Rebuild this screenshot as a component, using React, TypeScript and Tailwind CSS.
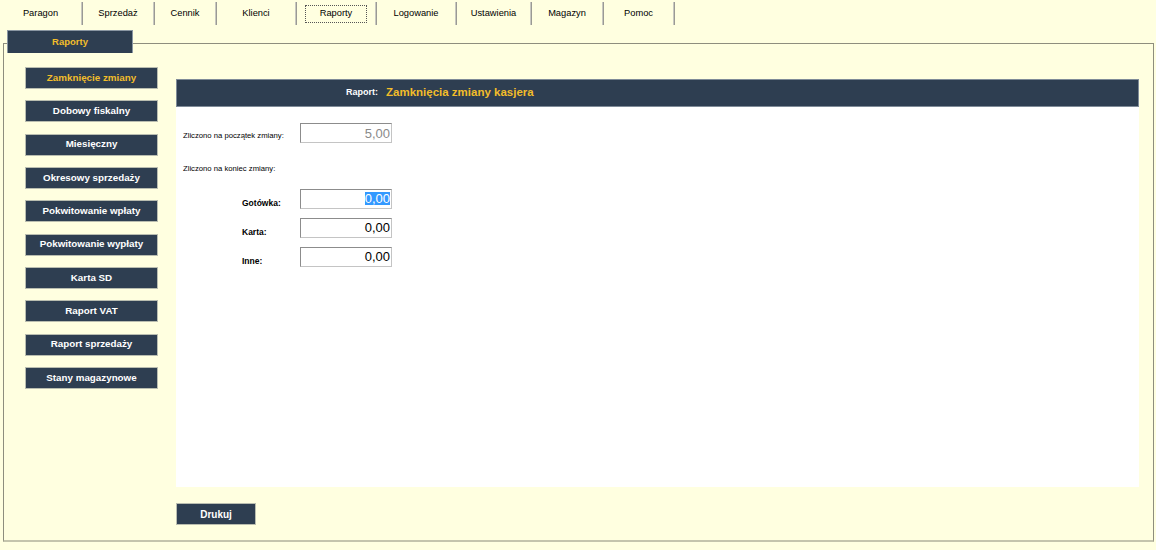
import React from "react";

const navItems: { label: string; w: string; active?: boolean }[] = [
  { label: "Paragon", w: "w-[81px]" },
  { label: "Sprzedaż", w: "w-[70px]" },
  { label: "Cennik", w: "w-[60px]" },
  { label: "Klienci", w: "w-[78px]" },
  { label: "Raporty", w: "w-[78px]", active: true },
  { label: "Logowanie", w: "w-[78px]" },
  { label: "Ustawienia", w: "w-[73px]" },
  { label: "Magazyn", w: "w-[70px]" },
  { label: "Pomoc", w: "w-[69px]" },
];

const sideButtons = [
  "Zamknięcie zmiany",
  "Dobowy fiskalny",
  "Miesięczny",
  "Okresowy sprzedaży",
  "Pokwitowanie wpłaty",
  "Pokwitowanie wypłaty",
  "Karta SD",
  "Raport VAT",
  "Raport sprzedaży",
  "Stany magazynowe",
];

function Field({ children, gray }: { children: React.ReactNode; gray?: boolean }) {
  return (
    <div
      className={
        "w-[92px] h-[20px] border border-[#c4c4c4] border-t-[#8c8c8c] border-l-[#8c8c8c] bg-white flex items-center justify-end pr-[1px] text-[13px] leading-none " +
        (gray ? "text-[#8a8a8a]" : "text-black")
      }
    >
      {children}
    </div>
  );
}

export default function App() {
  return (
    <div className="w-[1156px] h-[550px] bg-[#ffffe0] text-black font-['Liberation_Sans',Arial,sans-serif] overflow-hidden">
      {/* top navigation */}
      <nav className="flex h-[26px] pt-[2px]">
        {navItems.map((it) => (
          <React.Fragment key={it.label}>
            <div className={it.w + " h-[23px] flex items-center justify-center text-[9.3px]"}>
              {it.active ? (
                <span className="w-[62px] h-[18px] border border-dotted border-[#555] flex items-center justify-center">
                  {it.label}
                </span>
              ) : (
                <span>{it.label}</span>
              )}
            </div>
            <div className="w-[2px] h-[23px] bg-[#9a9a94] border-l border-[#c8c8c0]" />
          </React.Fragment>
        ))}
      </nav>

      {/* panel */}
      <div className="relative ml-[3px] mt-[17px] w-[1151px] h-[499px] border border-[#8e8e7e] border-b-2 border-b-[#c4c4ac]">
        <div className="absolute -top-[14px] left-[3px] w-[126px] h-[23px] bg-[#2e3e51] border border-[#8a96a2] border-b-0 flex items-center justify-center text-[9.5px] font-bold text-[#f2bd2a]">
          Raporty
        </div>

        <div className="flex pl-[21px] pt-[23px]">
          {/* side buttons */}
          <div className="flex flex-col gap-[11.33px] w-[133px]">
            {sideButtons.map((b, i) => (
              <div
                key={b}
                className={
                  "h-[22px] bg-[#2e3e51] border border-[#b9bdb0] flex items-center justify-center text-[9.8px] font-bold " +
                  (i === 0 ? "text-[#f2bd2a]" : "text-white")
                }
              >
                {b}
              </div>
            ))}
          </div>

          {/* main */}
          <div className="ml-[18px] mt-[12px] w-[963px]">
            <div className="h-[28px] bg-[#2e3e51] border border-[#7f8b98] flex items-center pl-[169px]">
              <span className="text-[9px] font-bold text-white">Raport:</span>
              <span className="ml-[8px] text-[11.5px] font-bold text-[#f2bd2a]">Zamknięcia zmiany kasjera</span>
            </div>
            <div className="h-[380px] bg-white pl-[7px] pt-[16px]">
              <div className="flex items-end">
                <div className="w-[117px] text-[7.7px] leading-none mb-[3px]">Zliczono na początek zmiany:</div>
                <Field gray>5,00</Field>
              </div>
              <div className="mt-[22px] text-[7.7px] leading-none">Zliczono na koniec zmiany:</div>
              <div className="mt-[16px] flex flex-col gap-[9px]">
                <div className="flex items-end">
                  <div className="w-[117px] pl-[59px] text-[8.5px] font-bold leading-none mb-[1px]">Gotówka:</div>
                  <Field>
                    <span className="bg-[#3399ff] text-white">0,00</span>
                  </Field>
                </div>
                <div className="flex items-end">
                  <div className="w-[117px] pl-[59px] text-[8.5px] font-bold leading-none mb-[1px]">Karta:</div>
                  <Field>0,00</Field>
                </div>
                <div className="flex items-end">
                  <div className="w-[117px] pl-[59px] text-[8.5px] font-bold leading-none mb-[1px]">Inne:</div>
                  <Field>0,00</Field>
                </div>
              </div>
            </div>
            <div className="mt-[16px] w-[80px] h-[22px] bg-[#2e3e51] border border-[#b9bdb0] flex items-center justify-center text-[10px] font-bold text-white">
              Drukuj
            </div>
          </div>
        </div>
      </div>
    </div>
  );
}
